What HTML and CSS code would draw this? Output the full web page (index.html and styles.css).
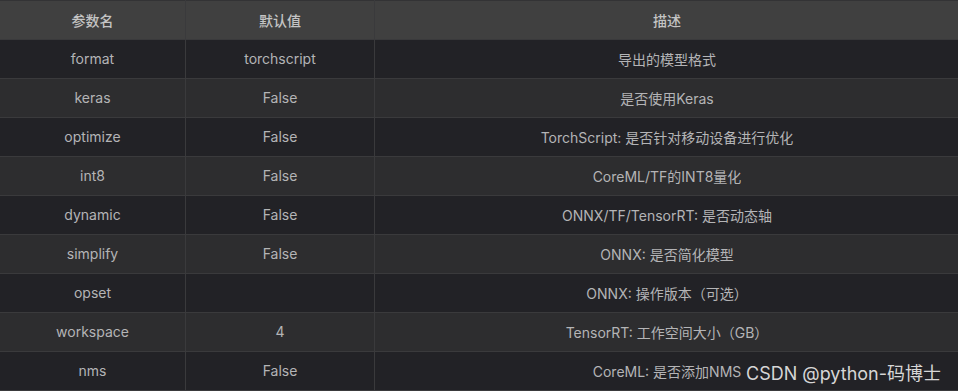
FILE: index.html
```html
<!DOCTYPE html>
<html lang="zh">
<head>
<meta charset="utf-8">
<link rel="stylesheet" href="styles.css">
</head>
<body>
<div class="wrap">
<table class="params">
  <thead>
    <tr><th class="c1">参数名</th><th class="c2">默认值</th><th>描述</th></tr>
  </thead>
  <tbody>
    <tr><td>format</td><td>torchscript</td><td>导出的模型格式</td></tr>
    <tr><td>keras</td><td>False</td><td>是否使用Keras</td></tr>
    <tr><td>optimize</td><td>False</td><td>TorchScript: 是否针对移动设备进行优化</td></tr>
    <tr><td>int8</td><td>False</td><td>CoreML/TF的INT8量化</td></tr>
    <tr><td>dynamic</td><td>False</td><td>ONNX/TF/TensorRT: 是否动态轴</td></tr>
    <tr><td>simplify</td><td>False</td><td>ONNX: 是否简化模型</td></tr>
    <tr><td>opset</td><td></td><td>ONNX: 操作版本（可选）</td></tr>
    <tr><td>workspace</td><td>4</td><td>TensorRT: 工作空间大小（GB）</td></tr>
    <tr><td>nms</td><td>False</td><td>CoreML: 是否添加NMS</td></tr>
  </tbody>
</table>
<div class="watermark">CSDN @python-码博士</div>
</div>
</body>
</html>
```
FILE: styles.css
```css
html, body {
  margin: 0;
  padding: 0;
  background: #222226;
}
.wrap {
  position: relative;
  width: 958px;
  height: 391px;
  overflow: hidden;
}
.params {
  border-collapse: collapse;
  width: 959px;
  table-layout: fixed;
  font-family: "Inter", "Noto Sans CJK SC", sans-serif;
  font-size: 14px;
  color: #b4b4b6;
}
.params th, .params td {
  height: 37px;
  padding: 0 0 1px 0;
  text-align: center;
  border: 1px solid #3a3a3c;
  border-left: 0;
}
.params th:last-child, .params td:last-child {
  border-right: 0;
}
.params tr:first-child th {
  border-top: 1px solid #333335;
}
.params th {
  background: #404040;
  color: #c4c4c4;
  font-weight: 500;
}
.params .c1 { width: 185px; }
.params .c2 { width: 188px; }
.params tbody tr:nth-child(odd) td { background: #222226; }
.params tbody tr:nth-child(even) td { background: #2d2d2f; }
.watermark {
  position: absolute;
  left: 746px;
  top: 359px;
  font-family: "Inter", "Noto Sans CJK SC", sans-serif;
  font-size: 18px;
  color: #d6d6d6;
  white-space: nowrap;
}
```
